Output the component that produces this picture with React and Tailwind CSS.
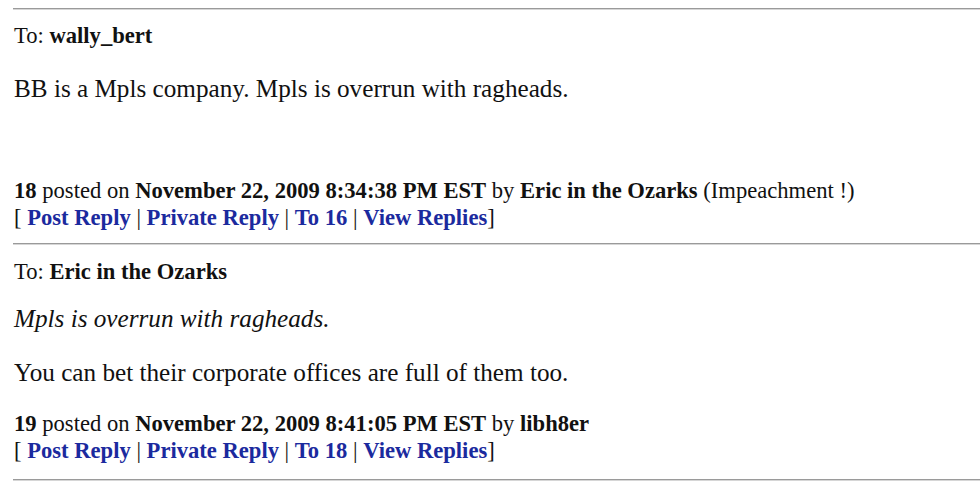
export default function App() {
  const serif = { fontFamily: '"Liberation Serif", "Times New Roman", serif' };
  const L = "font-bold text-[#1b2a9e]";
  const Links = ({ to }) => (
    <div className="text-[22.6px] leading-[27px] text-[#111]">
      [ <a className={L}>Post Reply</a> | <a className={L}>Private Reply</a> | <a className={L}>To {to}</a> | <a className={L}>View Replies</a>]
    </div>
  );
  const Hr = ({ className }) => (
    <div className={"h-[2px] -ml-px border-t border-[#9a9a9a] border-b border-b-[#d6d6d6] " + className}></div>
  );
  return (
    <div className="w-[980px] h-[492px] bg-white overflow-hidden pl-[14px] pt-[8px] text-[#111]" style={serif}>
      <Hr className="" />
      <div className="mt-[12px] text-[22.6px] leading-[27px]">To: <b>wally_bert</b></div>
      <div className="mt-[25px] text-[25.2px] leading-[30px]">BB is a Mpls company. Mpls is overrun with ragheads.</div>
      <div className="mt-[73px] text-[22.6px] leading-[27px]">
        <b>18</b> posted on <b>November 22, 2009 8:34:38 PM EST</b> by <b>Eric in the Ozarks</b> (Impeachment !)
      </div>
      <Links to="16" />
      <Hr className="mt-[12px]" />
      <div className="mt-[13px] text-[22.6px] leading-[27px]">To: <b>Eric in the Ozarks</b></div>
      <div className="mt-[19px] text-[25.2px] leading-[30px] italic">Mpls is overrun with ragheads.</div>
      <div className="mt-[24px] text-[25.2px] leading-[30px]">You can bet their corporate offices are full of them too.</div>
      <div className="mt-[22px] text-[22.6px] leading-[27px]">
        <b>19</b> posted on <b>November 22, 2009 8:41:05 PM EST</b> by <b>libh8er</b>
      </div>
      <Links to="18" />
      <Hr className="mt-[15px]" />
    </div>
  );
}
